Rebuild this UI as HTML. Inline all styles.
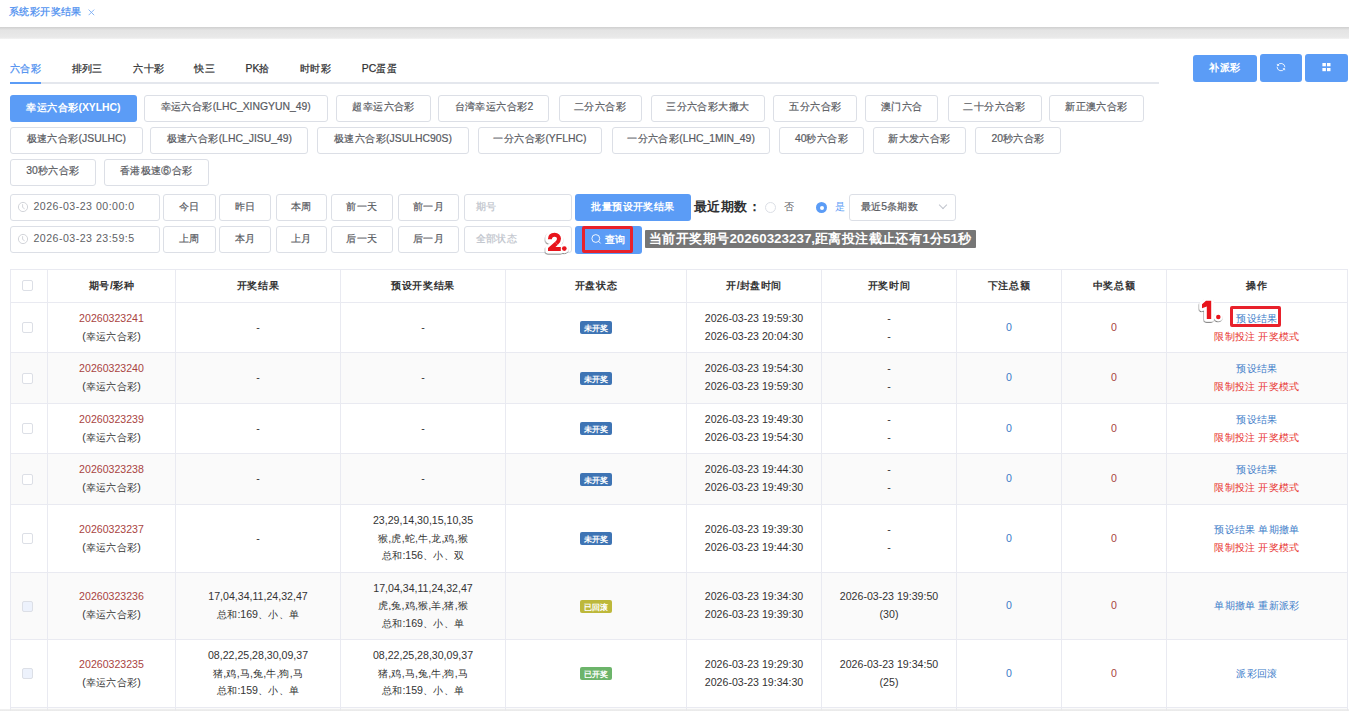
<!DOCTYPE html><html><head><meta charset="utf-8"><style>
*{box-sizing:border-box;margin:0;padding:0}
html,body{width:1349px;height:711px;overflow:hidden;background:#fff;font-family:"Liberation Sans",sans-serif;color:#333}
i{font-style:normal;letter-spacing:.4px}
.md{-webkit-text-stroke:.25px currentColor}
.ab{position:absolute}
.btn{-webkit-text-stroke:.2px currentColor;position:absolute;border:1px solid #dcdfe6;border-radius:3px;background:#fff;color:#585a5f;font-size:10.4px;text-align:center;white-space:nowrap}
.btnp{position:absolute;border-radius:3px;background:#5b9cf6;color:#fff;font-size:10.4px;text-align:center;white-space:nowrap;font-weight:bold}
.t{position:absolute;white-space:nowrap}
.vl{position:absolute;width:1px;background:#e9eaf1}
.hl{position:absolute;height:1px;background:#e9eaf1}
.cell{position:absolute;display:flex;flex-direction:column;align-items:center;justify-content:center;text-align:center;font-size:10.6px;line-height:17.6px;color:#333;white-space:nowrap}
.cell i{font-size:10.4px;letter-spacing:.3px}
.hd i{letter-spacing:.6px}
.badge{display:block;width:32px;height:13px;line-height:14px;border-radius:2px;color:#fff;font-size:8.4px;font-weight:bold;text-align:center}
.cell .badge i{font-size:8.4px;letter-spacing:.3px}
.cb{position:absolute;width:11px;height:11px;border:1px solid #dcdfe6;border-radius:2px;background:#fff}
</style></head><body>
<div class="t md" style="left:9px;top:5px;font-size:10.4px;line-height:14px;color:#4d8ff0"><i>系统彩开奖结果</i></div>
<svg class="ab" style="left:88px;top:9px" width="7" height="7" viewBox="0 0 7 7"><path d="M0.6 0.6 L6.2 6.2 M6.2 0.6 L0.6 6.2" stroke="#7aaef5" stroke-width="0.9"/></svg>
<div class="ab" style="left:0;top:27px;width:1349px;height:12px;background:linear-gradient(#cfcfcf,#e4e4e4 25%,#e9e9e9 85%,#f3f3f3)"></div>
<div class="t md" style="left:10px;top:62px;font-size:10.4px;line-height:14px;color:#4d8ff0"><i>六合彩</i></div>
<div class="t md" style="left:71.7px;top:62px;font-size:10.4px;line-height:14px;color:#303133"><i>排列三</i></div>
<div class="t md" style="left:133.2px;top:62px;font-size:10.4px;line-height:14px;color:#303133"><i>六十彩</i></div>
<div class="t md" style="left:194.4px;top:62px;font-size:10.4px;line-height:14px;color:#303133"><i>快三</i></div>
<div class="t md" style="left:245.5px;top:62px;font-size:10.4px;line-height:14px;color:#303133">PK<i>拾</i></div>
<div class="t md" style="left:300px;top:62px;font-size:10.4px;line-height:14px;color:#303133"><i>时时彩</i></div>
<div class="t md" style="left:361.8px;top:62px;font-size:10.4px;line-height:14px;color:#303133">PC<i>蛋蛋</i></div>
<div class="ab" style="left:10px;top:82px;width:1149px;height:2px;background:#e4e7ed"></div>
<div class="ab" style="left:10px;top:82px;width:31px;height:2px;background:#5b9cf6"></div>
<div class="btnp" style="left:1193px;top:55px;width:64px;height:27px;line-height:26px"><i>补派彩</i></div>
<div class="btnp" style="left:1260px;top:54px;width:42px;height:28px"></div>
<svg class="ab" style="left:1275px;top:61px" width="12" height="12" viewBox="0 0 12 12"><g fill="none" stroke="#fff" stroke-width="0.85"><path d="M2.6 4.4 A3.9 3.9 0 0 1 9.9 6.2"/><path d="M9.4 7.8 A3.9 3.9 0 0 1 2.1 5.8"/><path d="M2.2 2.9 L2.6 4.6 L4.2 4.3"/><path d="M9.8 9.2 L9.4 7.5 L7.8 7.8"/></g></svg>
<div class="btnp" style="left:1305px;top:54px;width:43px;height:28px"></div>
<svg class="ab" style="left:1322px;top:63px" width="9" height="9" viewBox="0 0 9 9"><rect x="0.4" y="0" width="3.5" height="3.3" fill="#fff"/><rect x="5" y="0" width="3.5" height="3.3" fill="#fff"/><rect x="0.4" y="5" width="3.5" height="3.2" fill="#fff"/><rect x="5" y="5" width="3.5" height="3.2" fill="#fff"/></svg>
<div class="btnp" style="left:10px;top:95px;width:127px;height:27px;line-height:25px"><i>幸运六合彩</i>(XYLHC)</div>
<div class="btn" style="left:144px;top:95px;width:183.5px;height:27px;line-height:22px"><i>幸运六合彩</i>(LHC_XINGYUN_49)</div>
<div class="btn" style="left:336.4px;top:95px;width:94.30000000000001px;height:27px;line-height:22px"><i>超幸运六合彩</i></div>
<div class="btn" style="left:438.4px;top:95px;width:111.10000000000002px;height:27px;line-height:22px"><i>台湾幸运六合彩</i>2</div>
<div class="btn" style="left:558.5px;top:95px;width:83.0px;height:27px;line-height:22px"><i>二分六合彩</i></div>
<div class="btn" style="left:650.5px;top:95px;width:114.79999999999995px;height:27px;line-height:22px"><i>三分六合彩大撒大</i></div>
<div class="btn" style="left:773.4px;top:95px;width:84.10000000000002px;height:27px;line-height:22px"><i>五分六合彩</i></div>
<div class="btn" style="left:865.4px;top:95px;width:73.0px;height:27px;line-height:22px"><i>澳门六合</i></div>
<div class="btn" style="left:947.5px;top:95px;width:94.09999999999991px;height:27px;line-height:22px"><i>二十分六合彩</i></div>
<div class="btn" style="left:1049.2px;top:95px;width:94.39999999999986px;height:27px;line-height:22px"><i>新正澳六合彩</i></div>
<div class="btn" style="left:10px;top:127px;width:132.5px;height:27px;line-height:22px"><i>极速六合彩</i>(JSULHC)</div>
<div class="btn" style="left:150.2px;top:127px;width:158.3px;height:27px;line-height:22px"><i>极速六合彩</i>(LHC_JISU_49)</div>
<div class="btn" style="left:317.4px;top:127px;width:151.20000000000005px;height:27px;line-height:22px"><i>极速六合彩</i>(JSULHC90S)</div>
<div class="btn" style="left:477.5px;top:127px;width:124.79999999999995px;height:27px;line-height:22px"><i>一分六合彩</i>(YFLHC)</div>
<div class="btn" style="left:611.6px;top:127px;width:158.89999999999998px;height:27px;line-height:22px"><i>一分六合彩</i>(LHC_1MIN_49)</div>
<div class="btn" style="left:778.6px;top:127px;width:85.79999999999995px;height:27px;line-height:22px">40<i>秒六合彩</i></div>
<div class="btn" style="left:872.5px;top:127px;width:93.89999999999998px;height:27px;line-height:22px"><i>新大发六合彩</i></div>
<div class="btn" style="left:975.4px;top:127px;width:85.19999999999993px;height:27px;line-height:22px">20<i>秒六合彩</i></div>
<div class="btn" style="left:10px;top:158.5px;width:85.5px;height:27px;line-height:22px">30<i>秒六合彩</i></div>
<div class="btn" style="left:104px;top:158.5px;width:104.6px;height:27px;line-height:22px"><i>香港极速⑥合彩</i></div>
<div class="btn" style="left:10px;top:193.5px;width:150px;height:27px"></div>
<div class="t" style="left:33.5px;top:192.5px;line-height:26px;font-size:10.6px;letter-spacing:.48px;color:#606266">2026-03-23 00:00:0</div>
<svg class="ab" style="left:17px;top:201.0px" width="12" height="12" viewBox="0 0 12 12"><circle cx="6" cy="6" r="4.6" fill="none" stroke="#c8cad0" stroke-width="0.8"/><path d="M5.6 3.2 L5.6 6.4 L7.6 7.8" fill="none" stroke="#c8cad0" stroke-width="0.8"/></svg>
<div class="btn" style="left:163.3px;top:194.0px;width:52.29999999999998px;height:27px;line-height:24px"><i>今日</i></div>
<div class="btn" style="left:219.3px;top:194.0px;width:52.099999999999966px;height:27px;line-height:24px"><i>昨日</i></div>
<div class="btn" style="left:275.6px;top:194.0px;width:51.599999999999966px;height:27px;line-height:24px"><i>本周</i></div>
<div class="btn" style="left:330.6px;top:194.0px;width:62.799999999999955px;height:27px;line-height:24px"><i>前一天</i></div>
<div class="btn" style="left:397.6px;top:194.0px;width:61.69999999999999px;height:27px;line-height:24px"><i>前一月</i></div>
<div class="btn" style="left:463.5px;top:193.5px;width:108px;height:27px;line-height:23px;text-align:left;padding-left:11px;color:#c0c4cc"><i>期号</i></div>
<div class="btn" style="left:10px;top:225.5px;width:150px;height:27px"></div>
<div class="t" style="left:33.5px;top:224.5px;line-height:26px;font-size:10.6px;letter-spacing:.48px;color:#606266">2026-03-23 23:59:5</div>
<svg class="ab" style="left:17px;top:233.0px" width="12" height="12" viewBox="0 0 12 12"><circle cx="6" cy="6" r="4.6" fill="none" stroke="#c8cad0" stroke-width="0.8"/><path d="M5.6 3.2 L5.6 6.4 L7.6 7.8" fill="none" stroke="#c8cad0" stroke-width="0.8"/></svg>
<div class="btn" style="left:163.3px;top:226.0px;width:52.29999999999998px;height:27px;line-height:24px"><i>上周</i></div>
<div class="btn" style="left:219.3px;top:226.0px;width:52.099999999999966px;height:27px;line-height:24px"><i>本月</i></div>
<div class="btn" style="left:275.6px;top:226.0px;width:51.599999999999966px;height:27px;line-height:24px"><i>上月</i></div>
<div class="btn" style="left:330.6px;top:226.0px;width:62.799999999999955px;height:27px;line-height:24px"><i>后一天</i></div>
<div class="btn" style="left:397.6px;top:226.0px;width:61.69999999999999px;height:27px;line-height:24px"><i>后一月</i></div>
<div class="btn" style="left:463.5px;top:225.5px;width:108px;height:27px;line-height:23px;text-align:left;padding-left:11px;color:#c0c4cc"><i>全部状态</i></div>
<div class="btnp" style="left:575px;top:194px;width:116px;height:27px;line-height:26px"><i>批量预设开奖结果</i></div>
<div class="btnp" style="left:575px;top:225.5px;width:67px;height:28px;line-height:27px;padding-left:13px"><i>查询</i></div>
<svg class="ab" style="left:590px;top:232px" width="12" height="13" viewBox="0 0 12 13"><circle cx="5.8" cy="6.5" r="3.9" fill="none" stroke="#fff" stroke-width="0.9"/><path d="M8.6 9.3 L10.6 11.4" stroke="#fff" stroke-width="0.9"/></svg>
<div class="t" style="left:694px;top:197.5px;font-size:13.4px;line-height:18px;font-weight:bold;color:#303133"><i>最近期数：</i></div>
<div class="ab" style="left:765px;top:202px;width:11px;height:11px;border:1px solid #dcdfe6;border-radius:50%;background:#fff"></div>
<div class="t" style="left:783.5px;top:200px;font-size:10.4px;line-height:14px;color:#606266"><i>否</i></div>
<div class="ab" style="left:816px;top:202px;width:11px;height:11px;border-radius:50%;background:#5b9cf6"></div>
<div class="ab" style="left:819.5px;top:205.5px;width:4px;height:4px;border-radius:50%;background:#fff"></div>
<div class="t" style="left:834.5px;top:200px;font-size:10.4px;line-height:14px;color:#5b9cf6"><i>是</i></div>
<div class="btn" style="left:848.5px;top:193.5px;width:107.5px;height:27px;line-height:23px;text-align:left;padding-left:11px"><i>最近</i>5<i>条期数</i></div>
<div class="ab" style="left:940px;top:202px;width:6px;height:6px;border-right:1px solid #c0c4cc;border-bottom:1px solid #c0c4cc;transform:rotate(45deg)"></div>
<div class="t" style="left:645px;top:230px;width:331px;height:17.5px;line-height:17.5px;background:#767676;color:#fff;font-weight:bold;font-size:13.4px;padding-left:4px;border-radius:1px"><i>当前开奖期号</i>20260323237,<i>距离投注截止还有</i>1<i>分</i>51<i>秒</i></div>
<div class="ab" style="left:582px;top:226px;width:50.5px;height:27px;border:3px solid #e8212b;border-radius:2px;z-index:10"></div>
<div class="ab" style="left:1230px;top:305.5px;width:51px;height:21.5px;border:3px solid #e8212b;border-radius:2px;z-index:10"></div>
<svg class="ab" style="left:0;top:0;z-index:10" width="1349" height="711" viewBox="0 0 1349 711"><defs><filter id="sh" x="-50%" y="-50%" width="200%" height="200%"><feDropShadow dx="-0.4" dy="1" stdDeviation="0.45" flood-color="#000" flood-opacity="0.6"/></filter></defs><g filter="url(#sh)" fill="#fff" stroke="#fff" stroke-linejoin="round"><path d="M549.9 239.2 C549.9 236 552 234.7 554.6 234.7 C557.3 234.7 559 236.4 559 238.7 C559 240.7 558 241.9 556.5 243.3" fill="none" stroke-width="9" stroke-linecap="round"/><path d="M555.17 241.81 L557.83 244.79 L555.46 246.9 L560.8 246.9 L560.8 250.9 L548 250.9 L548 248.1 Z" stroke-width="5"/><circle cx="564.3" cy="248.6" r="4.6" stroke="none"/><path d="M1206 300.8 L1211.2 300.8 L1211.2 318.9 L1206.8 318.9 L1206.8 306.5 L1202 308.3 L1202 304.2 Z" stroke-width="5.5"/><circle cx="1218.3" cy="316.9" r="4.4" stroke="none"/></g><path d="M549.9 239.2 C549.9 236 552 234.7 554.6 234.7 C557.3 234.7 559 236.4 559 238.7 C559 240.7 558 241.9 556.5 243.3" fill="none" stroke="#e8141c" stroke-width="4"/><path d="M555.17 241.81 L557.83 244.79 L555.46 246.9 L560.8 246.9 L560.8 250.9 L548 250.9 L548 248.1 Z" fill="#e8141c"/><circle cx="564.3" cy="248.6" r="2.35" fill="#e8141c"/><path d="M1206 300.8 L1211.2 300.8 L1211.2 318.9 L1206.8 318.9 L1206.8 306.5 L1202 308.3 L1202 304.2 Z" fill="#e8141c"/><circle cx="1218.3" cy="316.9" r="2.25" fill="#e8141c"/></svg>
<div class="ab" style="left:10px;top:352px;width:1338px;height:51px;background:#fafafa"></div>
<div class="ab" style="left:10px;top:453px;width:1338px;height:51px;background:#fafafa"></div>
<div class="ab" style="left:10px;top:572px;width:1338px;height:67px;background:#fafafa"></div>
<div class="ab" style="left:10px;top:707px;width:1338px;height:4px;background:#fafafa"></div>
<div class="ab" style="left:0;top:709px;width:1349px;height:2px;background:linear-gradient(rgba(230,230,230,.5),#e9e9e9);z-index:5"></div>
<div class="vl" style="left:10px;top:269px;height:442px"></div>
<div class="vl" style="left:47px;top:269px;height:442px"></div>
<div class="vl" style="left:175px;top:269px;height:442px"></div>
<div class="vl" style="left:340px;top:269px;height:442px"></div>
<div class="vl" style="left:505px;top:269px;height:442px"></div>
<div class="vl" style="left:686px;top:269px;height:442px"></div>
<div class="vl" style="left:821px;top:269px;height:442px"></div>
<div class="vl" style="left:956px;top:269px;height:442px"></div>
<div class="vl" style="left:1061px;top:269px;height:442px"></div>
<div class="vl" style="left:1166px;top:269px;height:442px"></div>
<div class="vl" style="left:1347px;top:269px;height:442px"></div>
<div class="hl" style="left:10px;top:269px;width:1338px"></div>
<div class="hl" style="left:10px;top:302px;width:1338px"></div>
<div class="hl" style="left:10px;top:352px;width:1338px"></div>
<div class="hl" style="left:10px;top:403px;width:1338px"></div>
<div class="hl" style="left:10px;top:453px;width:1338px"></div>
<div class="hl" style="left:10px;top:504px;width:1338px"></div>
<div class="hl" style="left:10px;top:572px;width:1338px"></div>
<div class="hl" style="left:10px;top:639px;width:1338px"></div>
<div class="hl" style="left:10px;top:707px;width:1338px"></div>
<div class="cell hd" style="left:48px;top:270px;width:127px;height:32px;font-weight:bold"><div><i>期号</i>/<i>彩种</i></div></div>
<div class="cell hd" style="left:176px;top:270px;width:164px;height:32px;font-weight:bold"><div><i>开奖结果</i></div></div>
<div class="cell hd" style="left:341px;top:270px;width:164px;height:32px;font-weight:bold"><div><i>预设开奖结果</i></div></div>
<div class="cell hd" style="left:506px;top:270px;width:180px;height:32px;font-weight:bold"><div><i>开盘状态</i></div></div>
<div class="cell hd" style="left:687px;top:270px;width:134px;height:32px;font-weight:bold"><div><i>开</i>/<i>封盘时间</i></div></div>
<div class="cell hd" style="left:822px;top:270px;width:134px;height:32px;font-weight:bold"><div><i>开奖时间</i></div></div>
<div class="cell hd" style="left:957px;top:270px;width:104px;height:32px;font-weight:bold"><div><i>下注总额</i></div></div>
<div class="cell hd" style="left:1062px;top:270px;width:104px;height:32px;font-weight:bold"><div><i>中奖总额</i></div></div>
<div class="cell hd" style="left:1167px;top:270px;width:180px;height:32px;font-weight:bold"><div><i>操作</i></div></div>
<div class="cb" style="left:22px;top:280px"></div>
<div class="cb" style="left:22px;top:322.0px;background:#fff"></div>
<div class="cell" style="left:48px;top:303px;width:127px;height:49px"><div><span style="color:#a94442">20260323241</span><br>(<i>幸运六合彩</i>)</div></div>
<div class="cell" style="left:176px;top:303px;width:164px;height:49px"><div>-</div></div>
<div class="cell" style="left:341px;top:303px;width:164px;height:49px"><div>-</div></div>
<div class="cell" style="left:506px;top:303px;width:180px;height:49px"><div><span class="badge" style="background:#3e74b4"><i>未开奖</i></span></div></div>
<div class="cell" style="left:687px;top:303px;width:134px;height:49px"><div>2026-03-23 19:59:30<br>2026-03-23 20:04:30</div></div>
<div class="cell" style="left:822px;top:303px;width:134px;height:49px"><div>-<br>-</div></div>
<div class="cell" style="left:957px;top:303px;width:104px;height:49px"><div><span style="color:#3d7cc9">0</span></div></div>
<div class="cell" style="left:1062px;top:303px;width:104px;height:49px"><div><span style="color:#a94442">0</span></div></div>
<div class="cell" style="left:1167px;top:303px;width:180px;height:49px"><div><span style="color:#3d7cc9"><i>预设结果</i></span><br><span style="color:#e8322e"><i>限制投注</i> <i>开奖模式</i></span></div></div>
<div class="cb" style="left:22px;top:372.5px;background:#fff"></div>
<div class="cell" style="left:48px;top:353px;width:127px;height:50px"><div><span style="color:#a94442">20260323240</span><br>(<i>幸运六合彩</i>)</div></div>
<div class="cell" style="left:176px;top:353px;width:164px;height:50px"><div>-</div></div>
<div class="cell" style="left:341px;top:353px;width:164px;height:50px"><div>-</div></div>
<div class="cell" style="left:506px;top:353px;width:180px;height:50px"><div><span class="badge" style="background:#3e74b4"><i>未开奖</i></span></div></div>
<div class="cell" style="left:687px;top:353px;width:134px;height:50px"><div>2026-03-23 19:54:30<br>2026-03-23 19:59:30</div></div>
<div class="cell" style="left:822px;top:353px;width:134px;height:50px"><div>-<br>-</div></div>
<div class="cell" style="left:957px;top:353px;width:104px;height:50px"><div><span style="color:#3d7cc9">0</span></div></div>
<div class="cell" style="left:1062px;top:353px;width:104px;height:50px"><div><span style="color:#a94442">0</span></div></div>
<div class="cell" style="left:1167px;top:353px;width:180px;height:50px"><div><span style="color:#3d7cc9"><i>预设结果</i></span><br><span style="color:#e8322e"><i>限制投注</i> <i>开奖模式</i></span></div></div>
<div class="cb" style="left:22px;top:423.0px;background:#fff"></div>
<div class="cell" style="left:48px;top:404px;width:127px;height:49px"><div><span style="color:#a94442">20260323239</span><br>(<i>幸运六合彩</i>)</div></div>
<div class="cell" style="left:176px;top:404px;width:164px;height:49px"><div>-</div></div>
<div class="cell" style="left:341px;top:404px;width:164px;height:49px"><div>-</div></div>
<div class="cell" style="left:506px;top:404px;width:180px;height:49px"><div><span class="badge" style="background:#3e74b4"><i>未开奖</i></span></div></div>
<div class="cell" style="left:687px;top:404px;width:134px;height:49px"><div>2026-03-23 19:49:30<br>2026-03-23 19:54:30</div></div>
<div class="cell" style="left:822px;top:404px;width:134px;height:49px"><div>-<br>-</div></div>
<div class="cell" style="left:957px;top:404px;width:104px;height:49px"><div><span style="color:#3d7cc9">0</span></div></div>
<div class="cell" style="left:1062px;top:404px;width:104px;height:49px"><div><span style="color:#a94442">0</span></div></div>
<div class="cell" style="left:1167px;top:404px;width:180px;height:49px"><div><span style="color:#3d7cc9"><i>预设结果</i></span><br><span style="color:#e8322e"><i>限制投注</i> <i>开奖模式</i></span></div></div>
<div class="cb" style="left:22px;top:473.5px;background:#fff"></div>
<div class="cell" style="left:48px;top:454px;width:127px;height:50px"><div><span style="color:#a94442">20260323238</span><br>(<i>幸运六合彩</i>)</div></div>
<div class="cell" style="left:176px;top:454px;width:164px;height:50px"><div>-</div></div>
<div class="cell" style="left:341px;top:454px;width:164px;height:50px"><div>-</div></div>
<div class="cell" style="left:506px;top:454px;width:180px;height:50px"><div><span class="badge" style="background:#3e74b4"><i>未开奖</i></span></div></div>
<div class="cell" style="left:687px;top:454px;width:134px;height:50px"><div>2026-03-23 19:44:30<br>2026-03-23 19:49:30</div></div>
<div class="cell" style="left:822px;top:454px;width:134px;height:50px"><div>-<br>-</div></div>
<div class="cell" style="left:957px;top:454px;width:104px;height:50px"><div><span style="color:#3d7cc9">0</span></div></div>
<div class="cell" style="left:1062px;top:454px;width:104px;height:50px"><div><span style="color:#a94442">0</span></div></div>
<div class="cell" style="left:1167px;top:454px;width:180px;height:50px"><div><span style="color:#3d7cc9"><i>预设结果</i></span><br><span style="color:#e8322e"><i>限制投注</i> <i>开奖模式</i></span></div></div>
<div class="cb" style="left:22px;top:533.0px;background:#fff"></div>
<div class="cell" style="left:48px;top:505px;width:127px;height:67px"><div><span style="color:#a94442">20260323237</span><br>(<i>幸运六合彩</i>)</div></div>
<div class="cell" style="left:176px;top:505px;width:164px;height:67px"><div>-</div></div>
<div class="cell" style="left:341px;top:505px;width:164px;height:67px"><div>23,29,14,30,15,10,35<br><i>猴</i>,<i>虎</i>,<i>蛇</i>,<i>牛</i>,<i>龙</i>,<i>鸡</i>,<i>猴</i><br><i>总和</i>:156<i>、小、双</i></div></div>
<div class="cell" style="left:506px;top:505px;width:180px;height:67px"><div><span class="badge" style="background:#3e74b4"><i>未开奖</i></span></div></div>
<div class="cell" style="left:687px;top:505px;width:134px;height:67px"><div>2026-03-23 19:39:30<br>2026-03-23 19:44:30</div></div>
<div class="cell" style="left:822px;top:505px;width:134px;height:67px"><div>-<br>-</div></div>
<div class="cell" style="left:957px;top:505px;width:104px;height:67px"><div><span style="color:#3d7cc9">0</span></div></div>
<div class="cell" style="left:1062px;top:505px;width:104px;height:67px"><div><span style="color:#a94442">0</span></div></div>
<div class="cell" style="left:1167px;top:505px;width:180px;height:67px"><div><span style="color:#3d7cc9"><i>预设结果</i> <i>单期撤单</i></span><br><span style="color:#e8322e"><i>限制投注</i> <i>开奖模式</i></span></div></div>
<div class="cb" style="left:22px;top:600.5px;background:#edf2fc"></div>
<div class="cell" style="left:48px;top:573px;width:127px;height:66px"><div><span style="color:#a94442">20260323236</span><br>(<i>幸运六合彩</i>)</div></div>
<div class="cell" style="left:176px;top:573px;width:164px;height:66px"><div>17,04,34,11,24,32,47<br><i>总和</i>:169<i>、小、单</i></div></div>
<div class="cell" style="left:341px;top:573px;width:164px;height:66px"><div>17,04,34,11,24,32,47<br><i>虎</i>,<i>兔</i>,<i>鸡</i>,<i>猴</i>,<i>羊</i>,<i>猪</i>,<i>猴</i><br><i>总和</i>:169<i>、小、单</i></div></div>
<div class="cell" style="left:506px;top:573px;width:180px;height:66px"><div><span class="badge" style="background:#bdb83a"><i>已回滚</i></span></div></div>
<div class="cell" style="left:687px;top:573px;width:134px;height:66px"><div>2026-03-23 19:34:30<br>2026-03-23 19:39:30</div></div>
<div class="cell" style="left:822px;top:573px;width:134px;height:66px"><div>2026-03-23 19:39:50<br>(30)</div></div>
<div class="cell" style="left:957px;top:573px;width:104px;height:66px"><div><span style="color:#3d7cc9">0</span></div></div>
<div class="cell" style="left:1062px;top:573px;width:104px;height:66px"><div><span style="color:#a94442">0</span></div></div>
<div class="cell" style="left:1167px;top:573px;width:180px;height:66px"><div><span style="color:#3d7cc9"><i>单期撤单</i> <i>重新派彩</i></span></div></div>
<div class="cb" style="left:22px;top:668.0px;background:#edf2fc"></div>
<div class="cell" style="left:48px;top:640px;width:127px;height:67px"><div><span style="color:#a94442">20260323235</span><br>(<i>幸运六合彩</i>)</div></div>
<div class="cell" style="left:176px;top:640px;width:164px;height:67px"><div>08,22,25,28,30,09,37<br><i>猪</i>,<i>鸡</i>,<i>马</i>,<i>兔</i>,<i>牛</i>,<i>狗</i>,<i>马</i><br><i>总和</i>:159<i>、小、单</i></div></div>
<div class="cell" style="left:341px;top:640px;width:164px;height:67px"><div>08,22,25,28,30,09,37<br><i>猪</i>,<i>鸡</i>,<i>马</i>,<i>兔</i>,<i>牛</i>,<i>狗</i>,<i>马</i><br><i>总和</i>:159<i>、小、单</i></div></div>
<div class="cell" style="left:506px;top:640px;width:180px;height:67px"><div><span class="badge" style="background:#6cb46a"><i>已开奖</i></span></div></div>
<div class="cell" style="left:687px;top:640px;width:134px;height:67px"><div>2026-03-23 19:29:30<br>2026-03-23 19:34:30</div></div>
<div class="cell" style="left:822px;top:640px;width:134px;height:67px"><div>2026-03-23 19:34:50<br>(25)</div></div>
<div class="cell" style="left:957px;top:640px;width:104px;height:67px"><div><span style="color:#3d7cc9">0</span></div></div>
<div class="cell" style="left:1062px;top:640px;width:104px;height:67px"><div><span style="color:#a94442">0</span></div></div>
<div class="cell" style="left:1167px;top:640px;width:180px;height:67px"><div><span style="color:#3d7cc9"><i>派彩回滚</i></span></div></div>
</body></html>
